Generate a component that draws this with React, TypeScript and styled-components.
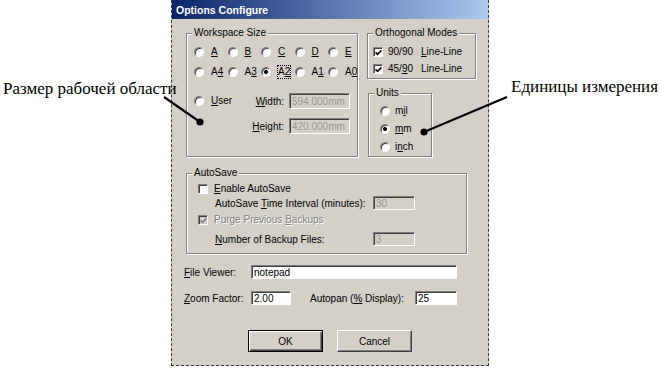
import React from "react"
import styled, { createGlobalStyle } from "styled-components"

const GlobalStyle = createGlobalStyle`
  html, body { margin: 0; padding: 0; background: #fff; }
  body { font-family: "Liberation Sans", Arial, sans-serif; }
`

const Page = styled.div`
  position: relative;
  width: 661px;
  height: 370px;
  display: flex;
  overflow: hidden;
  background: #fff;
`

const Note = styled.div<{ $w?: number; $top: number; $left: number }>`
  position: relative;
  z-index: 1;
  box-sizing: border-box;
  min-width: 0;
  flex: ${p => (p.$w ? `0 0 ${p.$w}px` : "1 1 auto")};
  padding-top: ${p => p.$top}px;
  padding-left: ${p => p.$left}px;
  font-family: "Liberation Serif", "Times New Roman", serif;
  font-size: 17px;
  line-height: 19px;
  white-space: nowrap;
  color: #000;
`

const Dialog = styled.div`
  flex: 0 0 318px;
  height: 366px;
  box-sizing: border-box;
  background: #d4d0c8;
  border: 1px dashed #3a3a3a;
  border-top: none;
  display: flex;
  flex-direction: column;
  font-size: 10px;
  color: #000;
`

const TitleBar = styled.div`
  height: 19px;
  display: flex;
  align-items: center;
  padding-left: 4px;
  background: linear-gradient(to right, #0a246a, #a6caf0);
  color: #fff;
  font-weight: bold;
  font-size: 10.5px;
`

const Body = styled.div`
  padding: 8px 12px 0 12px;
  display: flex;
  flex-direction: column;
`

const TopRow = styled.div`
  display: flex;
  gap: 9px;
  margin-left: 2px;
`

const SideCol = styled.div`
  display: flex;
  flex-direction: column;
  gap: 8px;
`

const Group = styled.fieldset<{ $w: number; $h: number }>`
  margin: 0;
  padding: 0;
  min-inline-size: 0;
  width: ${p => p.$w}px;
  height: ${p => p.$h}px;
  box-sizing: border-box;
  border: 1px solid #808080;
  box-shadow: 1px 1px 0 #fff, inset 1px 1px 0 #fff;
`

const Legend = styled.legend`
  margin-left: 5px;
  padding: 0 2px;
  line-height: 12px;
  font-size: 10px;
  background: #d4d0c8;
`

const Inner = styled.div<{ $pad: string }>`
  padding: ${p => p.$pad};
`

const RadioGrid = styled.div`
  display: grid;
  grid-template-columns: repeat(5, 33.5px);
  grid-auto-rows: 14px;
  row-gap: 6px;
`

const SizeGrid = styled.div`
  display: grid;
  grid-template-columns: 1fr auto 61px;
  grid-template-rows: 16px 16px;
  row-gap: 9px;
  column-gap: 5px;
  align-items: center;
  margin-top: 14px;
`

const Stack = styled.div<{ $gap: number }>`
  display: flex;
  flex-direction: column;
  gap: ${p => p.$gap}px;
`

const Option = styled.label<{ $gap?: number; $dim?: boolean }>`
  display: flex;
  align-items: center;
  gap: ${p => p.$gap ?? 6}px;
  height: 14px;
  white-space: nowrap;
  color: ${p => (p.$dim ? "#808080" : "#000")};
  text-shadow: ${p => (p.$dim ? "1px 1px 0 #fff" : "none")};
`

const OptText = styled.span<{ $focus?: boolean }>`
  line-height: 12px;
  outline: ${p => (p.$focus ? "1px dotted #000" : "none")};
`

const Key = styled.span`
  text-decoration: underline;
`

const RadioDot = styled.span<{ $on?: boolean }>`
  flex: none;
  width: 10px;
  height: 10px;
  box-sizing: border-box;
  border-radius: 50%;
  border: 1px solid;
  border-color: #808080 #fff #fff #808080;
  background: ${p => (p.$on ? "radial-gradient(circle, #000 0 1.6px, #fff 2.3px)" : "#fff")};
  box-shadow: inset 1px 1px 0 #404040;
`

const Box = styled.span<{ $dim?: boolean }>`
  flex: none;
  width: 10px;
  height: 10px;
  box-sizing: border-box;
  border: 1px solid;
  border-color: #808080 #fff #fff #808080;
  box-shadow: inset 1px 1px 0 #404040;
  background: ${p => (p.$dim ? "#d4d0c8" : "#fff")};
  display: flex;
  align-items: center;
  justify-content: center;
`

const Spaced = styled.span`
  margin-left: 8px;
`

const Label = styled.span<{ $right?: boolean; $col?: number }>`
  white-space: nowrap;
  justify-self: ${p => (p.$right ? "end" : "start")};
  grid-column: ${p => p.$col ?? "auto"};
`

const Field = styled.input<{ $w?: number; $h?: number }>`
  width: ${p => (p.$w ? `${p.$w}px` : "100%")};
  height: ${p => p.$h ?? 14}px;
  box-sizing: border-box;
  margin: 0;
  padding: 0 2px;
  border: 1px solid;
  border-color: #808080 #fff #fff #808080;
  box-shadow: inset 1px 1px 0 #404040;
  background: #fff;
  font: 10px "Liberation Sans", Arial, sans-serif;
  color: #000;
  outline: none;
  &:disabled {
    background: #d4d0c8;
    color: #9a968e;
  }
`

const SaveGrid = styled.div`
  display: grid;
  grid-template-columns: 17px 1fr 42px;
  grid-template-rows: 14px 14px 20px 18px;
  align-items: center;
  padding: 3px 51px 0 11px;
`

const Wide = styled.div`
  grid-column: 1 / -1;
`

const FormRow = styled.div<{ $top: number }>`
  display: flex;
  align-items: center;
  height: 14px;
  margin-top: ${p => p.$top}px;
`

const FormLabel = styled.span<{ $w: number; $ml?: number }>`
  flex: 0 0 ${p => p.$w}px;
  margin-left: ${p => p.$ml ?? 0}px;
  white-space: nowrap;
`

const Buttons = styled.div`
  display: flex;
  justify-content: center;
  gap: 14px;
  margin-top: 25px;
`

const Button = styled.button<{ $primary?: boolean }>`
  width: 75px;
  height: 22px;
  margin: 0;
  padding: 0;
  background: #d4d0c8;
  font: 10px "Liberation Sans", Arial, sans-serif;
  color: #000;
  border: 1px solid;
  border-color: ${p => (p.$primary ? "#000" : "#fff #404040 #404040 #fff")};
  box-shadow: ${p =>
    p.$primary
      ? "inset 1px 1px 0 #fff, inset -1px -1px 0 #404040, inset -2px -2px 0 #808080"
      : "inset -1px -1px 0 #808080"};
`

const Pointers = styled.svg`
  position: absolute;
  left: 0;
  top: 0;
  z-index: 2;
  pointer-events: none;
`

const Check = () => (
  <svg width="7" height="7" viewBox="0 0 7 7">
    <path d="M0.6 3.4 L2.6 5.4 L6.4 1.4" fill="none" stroke="currentColor" strokeWidth="1.6" />
  </svg>
)

const sizes1 = ["A", "B", "C", "D", "E"]
const sizes2 = ["A4", "A3", "A2", "A1", "A0"]

const App = () => {
  return (
    <Page>
      <GlobalStyle />
      <Note $w={171} $top={79} $left={3}>Размер рабочей области</Note>

      <Dialog>
        <TitleBar>Options Configure</TitleBar>
        <Body>
          <TopRow>
            <Group $w={172} $h={130}>
              <Legend>Workspace Size</Legend>
              <Inner $pad="6px 7px 0 7px">
                <RadioGrid>
                  {sizes1.map(s => (
                    <Option key={s} $gap={7}>
                      <RadioDot />
                      <OptText><Key>{s}</Key></OptText>
                    </Option>
                  ))}
                  {sizes2.map(s => (
                    <Option key={s} $gap={7}>
                      <RadioDot $on={s === "A2"} />
                      <OptText $focus={s === "A2"}>
                        A<Key>{s[1]}</Key>
                      </OptText>
                    </Option>
                  ))}
                </RadioGrid>
                <SizeGrid>
                  <Option $gap={7}>
                    <RadioDot />
                    <OptText><Key>U</Key>ser</OptText>
                  </Option>
                  <Label $right><Key>W</Key>idth:</Label>
                  <Field $h={16} disabled value="594.000mm" readOnly />
                  <Label $right $col={2}><Key>H</Key>eight:</Label>
                  <Field $h={16} disabled value="420.000mm" readOnly />
                </SizeGrid>
              </Inner>
            </Group>

            <SideCol>
              <Group $w={109} $h={52}>
                <Legend>Orthogonal Modes</Legend>
                <Inner $pad="6px 0 0 5px">
                  <Stack $gap={3}>
                    <Option $gap={5}>
                      <Box><Check /></Box>
                      <OptText>90/90<Spaced><Key>L</Key>ine-Line</Spaced></OptText>
                    </Option>
                    <Option $gap={5}>
                      <Box><Check /></Box>
                      <OptText>45/<Key>9</Key>0<Spaced>Line-Line</Spaced></OptText>
                    </Option>
                  </Stack>
                </Inner>
              </Group>
              <Group $w={64} $h={70} style={{ marginLeft: 1 }}>
                <Legend>Units</Legend>
                <Inner $pad="5px 0 0 11px">
                  <Stack $gap={4}>
                    <Option $gap={5}>
                      <RadioDot />
                      <OptText>m<Key>i</Key>l</OptText>
                    </Option>
                    <Option $gap={5}>
                      <RadioDot $on />
                      <OptText><Key>m</Key>m</OptText>
                    </Option>
                    <Option $gap={5}>
                      <RadioDot />
                      <OptText>i<Key>n</Key>ch</OptText>
                    </Option>
                  </Stack>
                </Inner>
              </Group>
            </SideCol>
          </TopRow>

          <Group $w={281} $h={87} style={{ marginLeft: 2, marginTop: 10 }}>
            <Legend>AutoSave</Legend>
            <SaveGrid>
              <Wide>
                <Option $gap={6}>
                  <Box />
                  <OptText><Key>E</Key>nable AutoSave</OptText>
                </Option>
              </Wide>
              <Label $col={2}>AutoSave <Key>T</Key>ime Interval (minutes):</Label>
              <Field disabled value="30" readOnly />
              <Wide>
                <Option $gap={6} $dim>
                  <Box $dim><Check /></Box>
                  <OptText>Purge Previous <Key>B</Key>ackups</OptText>
                </Option>
              </Wide>
              <Label $col={2}><Key>N</Key>umber of Backup Files:</Label>
              <Field disabled value="3" readOnly />
            </SaveGrid>
          </Group>

          <FormRow $top={11}>
            <FormLabel $w={67}><Key>F</Key>ile Viewer:</FormLabel>
            <Field $w={206} value="notepad" readOnly />
          </FormRow>
          <FormRow $top={12}>
            <FormLabel $w={67}><Key>Z</Key>oom Factor:</FormLabel>
            <Field $w={40} value="2.00" readOnly />
            <FormLabel $w={105} $ml={19}>Autopan (<Key>%</Key> Display):</FormLabel>
            <Field $w={42} value="25" readOnly />
          </FormRow>

          <Buttons>
            <Button $primary>OK</Button>
            <Button>Cancel</Button>
          </Buttons>
        </Body>
      </Dialog>

      <Note $top={77} $left={22}>Единицы измерения</Note>

      <Pointers width="661" height="370" viewBox="0 0 661 370">
        <line x1="164" y1="97" x2="200" y2="122" stroke="#000" strokeWidth="2.2" />
        <circle cx="200" cy="122" r="3.6" fill="#000" />
        <line x1="507" y1="97" x2="424" y2="132" stroke="#000" strokeWidth="2.2" />
        <circle cx="424" cy="132" r="3.6" fill="#000" />
      </Pointers>
    </Page>
  )
}

export default App
